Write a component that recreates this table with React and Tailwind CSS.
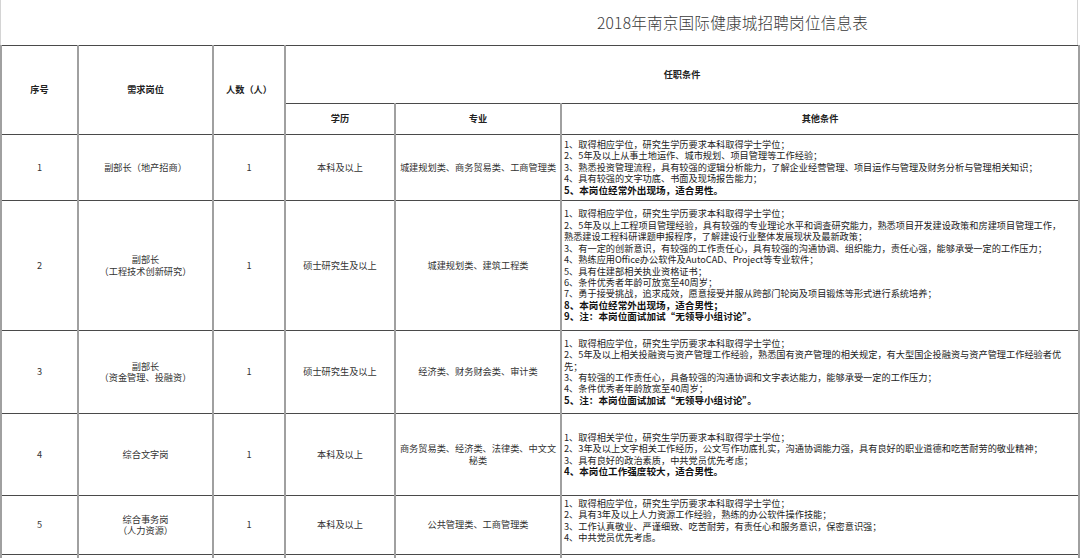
const rows = [
  {
    no: "1",
    post: ["副部长（地产招商）"],
    count: "1",
    edu: "本科及以上",
    major: ["城建规划类、商务贸易类、工商管理类"],
    h: "h-[66px]",
    lines: [
      ["1、取得相应学位，研究生学历要求本科取得学士学位；"],
      ["2、5年及以上从事土地运作、城市规划、项目管理等工作经验；"],
      ["3、熟悉投资管理流程，具有较强的逻辑分析能力，了解企业经营管理、项目运作与管理及财务分析与管理相关知识；"],
      ["4、具有较强的文字功底、书面及现场报告能力；"],
      ["5、本岗位经常外出现场，适合男性。", true],
    ],
  },
  {
    no: "2",
    post: ["副部长", "（工程技术创新研究）"],
    count: "1",
    edu: "硕士研究生及以上",
    major: ["城建规划类、建筑工程类"],
    h: "h-[130px]",
    lines: [
      ["1、取得相应学位，研究生学历要求本科取得学士学位；"],
      ["2、5年及以上工程项目管理经验，具有较强的专业理论水平和调查研究能力，熟悉项目开发建设政策和房建项目管理工作，"],
      ["熟悉建设工程科研课题申报程序，了解建设行业整体发展现状及最新政策；"],
      ["3、有一定的创新意识，有较强的工作责任心，具有较强的沟通协调、组织能力，责任心强，能够承受一定的工作压力；"],
      ["4、熟练应用Office办公软件及AutoCAD、Project等专业软件；"],
      ["5、具有住建部相关执业资格证书；"],
      ["6、条件优秀者年龄可放宽至40周岁；"],
      ["7、勇于接受挑战，追求成效，愿意接受并服从跨部门轮岗及项目锻炼等形式进行系统培养；"],
      ["8、本岗位经常外出现场，适合男性；", true],
      ["9、注：本岗位面试加试“无领导小组讨论”。", true],
    ],
  },
  {
    no: "3",
    post: ["副部长", "（资金管理、投融资）"],
    count: "1",
    edu: "硕士研究生及以上",
    major: ["经济类、财务财会类、审计类"],
    h: "h-[83px]",
    lines: [
      ["1、取得相应学位，研究生学历要求本科取得学士学位；"],
      ["2、5年及以上相关投融资与资产管理工作经验，熟悉国有资产管理的相关规定，有大型国企投融资与资产管理工作经验者优"],
      ["先；"],
      ["3、有较强的工作责任心，具备较强的沟通协调和文字表达能力，能够承受一定的工作压力；"],
      ["4、条件优秀者年龄放宽至40周岁；"],
      ["5、注：本岗位面试加试“无领导小组讨论”。", true],
    ],
  },
  {
    no: "4",
    post: ["综合文字岗"],
    count: "1",
    edu: "本科及以上",
    major: ["商务贸易类、经济类、法律类、中文文", "秘类"],
    h: "h-[82px]",
    lines: [
      ["1、取得相关学位，研究生学历要求本科取得学士学位；"],
      ["2、3年及以上文字相关工作经历，公文写作功底扎实，沟通协调能力强，具有良好的职业道德和吃苦耐劳的敬业精神；"],
      ["3、具有良好的政治素质，中共党员优先考虑；"],
      ["4、本岗位工作强度较大，适合男性。", true],
    ],
  },
  {
    no: "5",
    post: ["综合事务岗", "（人力资源）"],
    count: "1",
    edu: "本科及以上",
    major: ["公共管理类、工商管理类"],
    h: "h-[59px]",
    pad: "pb-[9px]",
    lines: [
      ["1、取得相应学位，研究生学历要求本科取得学士学位；"],
      ["2、具有3年及以上人力资源工作经验，熟练的办公软件操作技能；"],
      ["3、工作认真敬业、严谨细致、吃苦耐劳，有责任心和服务意识，保密意识强；"],
      ["4、中共党员优先考虑。"],
    ],
  },
];

const cell =
  "border-x-2 border-x-[#a0a0a0] border-y border-y-[#4a4a4a] text-center align-middle";

export default function App() {
  return (
    <div className="w-[1080px] h-[558px] overflow-hidden bg-white text-[#333] font-['Noto_Sans_CJK_SC','Noto_Sans',sans-serif]">
      <div className="w-[1078px] h-[45px] border-x border-[#d4d4d4] flex items-center pl-[596px]">
        <span className="text-[15.6px] font-light text-[#3a3a3a] tracking-[0.2px]">
          2018年南京国际健康城招聘岗位信息表
        </span>
      </div>
      <table className="table-fixed border-collapse w-[1078px] text-[9.2px] leading-[11.4px]">
        <colgroup>
          <col className="w-[77px]" />
          <col className="w-[135px]" />
          <col className="w-[72px]" />
          <col className="w-[110px]" />
          <col className="w-[166px]" />
          <col className="w-[518px]" />
        </colgroup>
        <thead className="font-bold text-[#222]">
          <tr className="h-[58px]">
            <th rowSpan={2} className={cell}>序号</th>
            <th rowSpan={2} className={cell}>需求岗位</th>
            <th rowSpan={2} className={cell}>人数（人）</th>
            <th colSpan={3} className={cell}>任职条件</th>
          </tr>
          <tr className="h-[31px]">
            <th className={cell}>学历</th>
            <th className={cell}>专业</th>
            <th className={cell}>其他条件</th>
          </tr>
        </thead>
        <tbody>
          {rows.map((r) => (
            <tr key={r.no} className={r.h}>
              <td className={cell}>{r.no}</td>
              <td className={cell}>
                {r.post.map((p) => (
                  <div key={p}>{p}</div>
                ))}
              </td>
              <td className={cell}>{r.count}</td>
              <td className={cell}>{r.edu}</td>
              <td className={cell}>
                {r.major.map((m) => (
                  <div key={m} className="whitespace-nowrap">{m}</div>
                ))}
              </td>
              <td className={cell + " !text-left pl-[2px] text-[#222] " + (r.pad || "")}>
                {r.lines.map(([t, b]) => (
                  <div
                    key={t}
                    className={
                      b
                        ? "whitespace-nowrap font-bold text-[9.6px] text-[#111]"
                        : "whitespace-nowrap"
                    }
                  >
                    {t}
                  </div>
                ))}
              </td>
            </tr>
          ))}
          <tr className="h-[20px]">
            <td className={cell}></td>
            <td className={cell}></td>
            <td className={cell}></td>
            <td className={cell}></td>
            <td className={cell}></td>
            <td className={cell}></td>
          </tr>
        </tbody>
      </table>
    </div>
  );
}
